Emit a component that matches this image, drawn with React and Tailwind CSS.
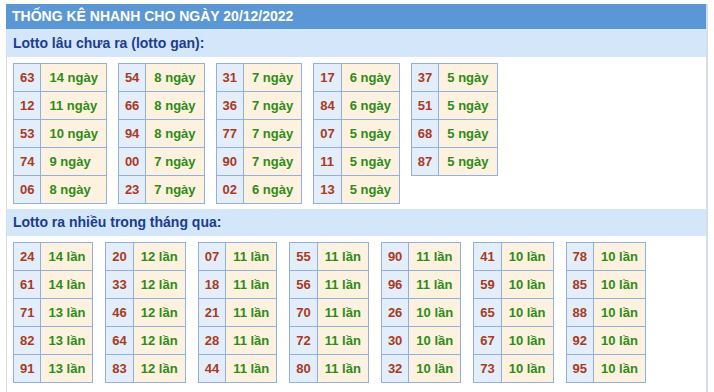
import React from "react";

const gan = [
  [["63", "14 ngày"], ["12", "11 ngày"], ["53", "10 ngày"], ["74", "9 ngày"], ["06", "8 ngày"]],
  [["54", "8 ngày"], ["66", "8 ngày"], ["94", "8 ngày"], ["00", "7 ngày"], ["23", "7 ngày"]],
  [["31", "7 ngày"], ["36", "7 ngày"], ["77", "7 ngày"], ["90", "7 ngày"], ["02", "6 ngày"]],
  [["17", "6 ngày"], ["84", "6 ngày"], ["07", "5 ngày"], ["11", "5 ngày"], ["13", "5 ngày"]],
  [["37", "5 ngày"], ["51", "5 ngày"], ["68", "5 ngày"], ["87", "5 ngày"]],
];

const nhieu = [
  [["24", "14 lần"], ["61", "14 lần"], ["71", "13 lần"], ["82", "13 lần"], ["91", "13 lần"]],
  [["20", "12 lần"], ["33", "12 lần"], ["46", "12 lần"], ["64", "12 lần"], ["83", "12 lần"]],
  [["07", "11 lần"], ["18", "11 lần"], ["21", "11 lần"], ["28", "11 lần"], ["44", "11 lần"]],
  [["55", "11 lần"], ["56", "11 lần"], ["70", "11 lần"], ["72", "11 lần"], ["80", "11 lần"]],
  [["90", "11 lần"], ["96", "11 lần"], ["26", "10 lần"], ["30", "10 lần"], ["32", "10 lần"]],
  [["41", "10 lần"], ["59", "10 lần"], ["65", "10 lần"], ["67", "10 lần"], ["73", "10 lần"]],
  [["78", "10 lần"], ["85", "10 lần"], ["88", "10 lần"], ["92", "10 lần"], ["95", "10 lần"]],
];

function T({ rows, wide }) {
  return (
    <table className="border-collapse self-start">
      <tbody>
        {rows.map(([n, v], i) => (
          <tr key={i} className="h-[28px]">
            <td className="border border-[#8fb0e0] bg-[#e4eefb] px-[6px] text-[#a83a22] leading-none">{n}</td>
            <td className={(wide ? "px-[8px] " : "px-[7px] ") + "border border-[#8fb0e0] bg-[#fdf2e0] text-[#2e8b17] leading-none whitespace-nowrap"}>{v}</td>
          </tr>
        ))}
      </tbody>
    </table>
  );
}

export default function App() {
  return (
    <div className="w-[714px] h-[392px] bg-white overflow-hidden pt-[4px]" style={{ fontFamily: '"Liberation Sans", Arial, sans-serif' }}>
      <div className="ml-[6px] w-[702px] h-[388px] border-r-2 border-l border-[#d5dde6]">
        <div className="h-[25px] bg-[#5b97d5] text-white font-bold text-[14px] flex items-center pl-[6px] -ml-px">
          THỐNG KÊ NHANH CHO NGÀY 20/12/2022
        </div>
        <div className="h-[28px] bg-[#d4e6f9] text-[#1b3d8f] font-bold text-[14px] flex items-center pl-[6px]">
          Lotto lâu chưa ra (lotto gan):
        </div>
        <div className="flex gap-[11px] pl-[6px] pt-[6px] font-bold text-[13px]">
          {gan.map((r, i) => <T key={i} rows={r} wide />)}
        </div>
        <div className="h-[27px] mt-[5px] bg-[#d4e6f9] text-[#1b3d8f] font-bold text-[14px] flex items-center pl-[6px]">
          Lotto ra nhiều trong tháng qua:
        </div>
        <div className="flex gap-[12px] pl-[6px] pt-[6px] font-bold text-[13px]">
          {nhieu.map((r, i) => <T key={i} rows={r} />)}
        </div>
      </div>
    </div>
  );
}
